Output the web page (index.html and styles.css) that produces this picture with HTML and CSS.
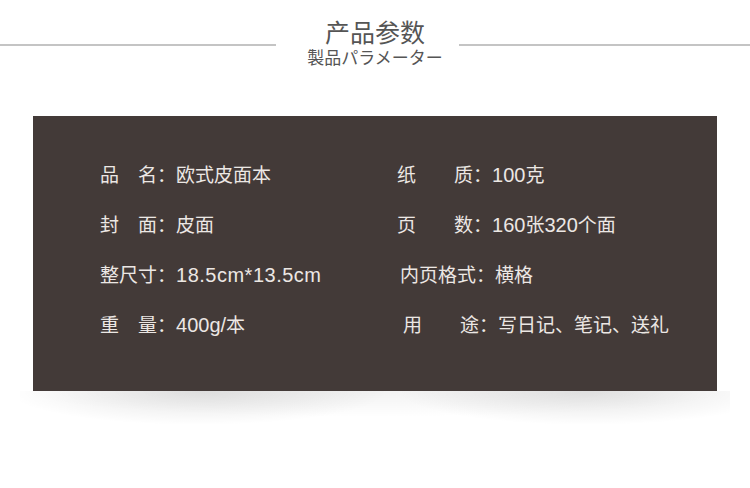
FILE: index.html
```html
<!DOCTYPE html>
<html lang="zh-CN">
<head>
    <meta charset="UTF-8">
    <meta name="viewport" content="width=device-width, initial-scale=1.0">
    <title>产品参数</title>
    <link rel="stylesheet" href="styles.css">
</head>
<body>
    <div class="heading">
        <span class="heading-line left"></span>
        <div class="heading-text">
            <h1>产品参数</h1>
            <p>製品パラメーター</p>
        </div>
        <span class="heading-line"></span>
    </div>

    <div class="params">
        <div class="param">
            <span class="label">品名</span>：欧式皮面本
        </div>
        <div class="param right">
            <span class="label">纸质</span>：<span class="num">100</span>克
        </div>

        <div class="param">
            <span class="label">封面</span>：皮面
        </div>
        <div class="param right">
            <span class="label">页数</span>：<span class="num">160</span>张<span class="num">320</span>个面
        </div>

        <div class="param">
            <span class="label">整尺寸</span>：<span class="num wide">18.5cm*13.5cm</span>
        </div>
        <div class="param right shift-1">
            <span class="label">内页格式</span>：横格
        </div>

        <div class="param">
            <span class="label">重量</span>：<span class="num">400g/</span>本
        </div>
        <div class="param right shift-2">
            <span class="label">用途</span>：写日记、笔记、送礼
        </div>
    </div>
    <div class="params-shadow"></div>
</body>
</html>
```

FILE: styles.css
```css
body {
    font-family: "Liberation Sans", "Noto Sans CJK SC", sans-serif;
    margin: 0;
    padding: 0;
    background-color: #fff;
}

.heading {
    display: flex;
    align-items: flex-start;
    padding-top: 18px;
}

.heading-line {
    flex: 1;
    height: 2px;
    margin-top: 26px;
    background-color: #c4c4c4;
}

.heading-line.left {
    flex: none;
    width: 276px;
}

.heading-text {
    box-sizing: border-box;
    width: 183px;
    padding-left: 15px;
    text-align: center;
    color: #555;
}

.heading-text h1 {
    margin: 0;
    font-size: 25px;
    font-weight: normal;
    line-height: 30px;
}

.heading-text p {
    margin: 0;
    font-size: 17px;
    line-height: 22px;
    white-space: nowrap;
}

.params {
    display: grid;
    grid-template-columns: 297px 1fr;
    margin: 46px 33px 0;
    padding: 35px 0 40px 67px;
    background-color: #433a38;
    color: #ece7e4;
    font-size: 19px;
    line-height: 50px;
}

/* soft shadow under the card, darker toward both ends */
.params-shadow {
    height: 36px;
    margin: 0 20px;
    background:
        radial-gradient(ellipse 190px 34px at 25% 0, rgba(0, 0, 0, 0.11), rgba(0, 0, 0, 0) 100%),
        radial-gradient(ellipse 190px 34px at 80% 0, rgba(0, 0, 0, 0.11), rgba(0, 0, 0, 0) 100%),
        radial-gradient(ellipse 360px 26px at 50% 0, rgba(0, 0, 0, 0.05), rgba(0, 0, 0, 0) 100%);
}

.param {
    white-space: nowrap;
}

.label {
    display: inline-block;
    width: 57px;
    text-align: justify;
    text-align-last: justify;
    vertical-align: top;
}

.right .label {
    width: 76px;
}

.num {
    font-size: 20px;
    line-height: 1;
}

.num.wide {
    letter-spacing: 0.5px;
}

.shift-1 {
    margin-left: 3px;
}

.shift-2 {
    margin-left: 6px;
}
```
